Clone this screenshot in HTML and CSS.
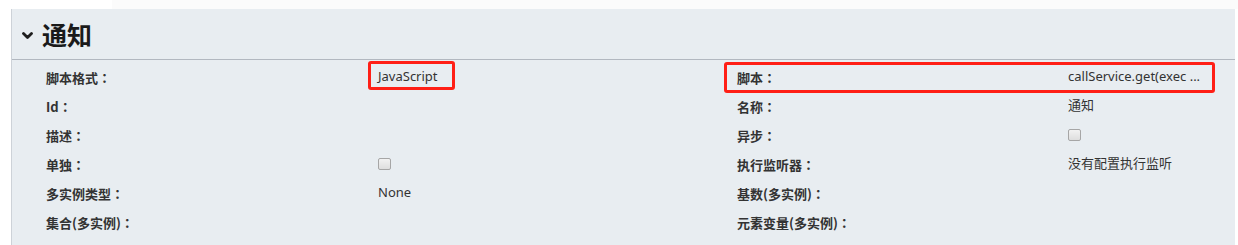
FILE: index.html
```html
<!DOCTYPE html>
<html lang="zh-CN">
<head>
<meta charset="utf-8">
<title>通知</title>
<link rel="stylesheet" href="styles.css">
</head>
<body>
<div class="topbar"><div class="tab"></div></div>
<section class="panel">
  <header class="panel-head">
    <svg class="chev" width="11" height="8" viewBox="0 0 11 8"><polyline points="1.5,1.5 5.5,5.5 9.5,1.5" fill="none" stroke="#1e1e1e" stroke-width="2.8" stroke-linecap="round" stroke-linejoin="round"/></svg>
    <h2 class="title">通知</h2>
  </header>
  <div class="props">
    <div class="lbl">脚本格式<span class="c">：</span></div><div class="val">JavaScript</div>
    <div class="lbl">脚本<span class="c">：</span></div><div class="val">callService.get(exec ...</div>

    <div class="lbl">Id<span class="c">：</span></div><div class="val"></div>
    <div class="lbl">名称<span class="c">：</span></div><div class="val">通知</div>

    <div class="lbl">描述<span class="c">：</span></div><div class="val"></div>
    <div class="lbl">异步<span class="c">：</span></div><div class="val"><input type="checkbox" class="cb"></div>

    <div class="lbl">单独<span class="c">：</span></div><div class="val"><input type="checkbox" class="cb"></div>
    <div class="lbl">执行监听器<span class="c">：</span></div><div class="val">没有配置执行监听</div>

    <div class="lbl">多实例类型<span class="c">：</span></div><div class="val">None</div>
    <div class="lbl">基数(多实例)<span class="c">：</span></div><div class="val"></div>

    <div class="lbl">集合(多实例)<span class="c">：</span></div><div class="val"></div>
    <div class="lbl">元素变量(多实例)<span class="c">：</span></div><div class="val"></div>

    <div class="lbl"></div><div class="val"></div>
    <div class="lbl"></div><div class="val"><input type="checkbox" class="cb"></div>
  </div>
  <div class="mark mark-left"></div>
  <div class="mark mark-right"></div>
</section>
</body>
</html>
```
FILE: styles.css
```css
html, body {
  margin: 0;
  padding: 0;
  background: #ffffff;
  overflow: hidden;
}
body {
  width: 1238px;
  height: 245px;
  font-family: "Noto Sans", "Noto Sans CJK SC", sans-serif;
  color: #333333;
}
.topbar {
  height: 9px;
  background: #fbfbfb;
}
.tab {
  width: 112px;
  height: 9px;
  background: #ffffff;
}
.panel {
  position: relative;
  margin: 0 3px 0 11px;
  border-left: 1px solid #cdd2d8;
  background: #e8edf1;
  height: 236px;
  overflow: hidden;
}
.panel-head {
  height: 50px;
  display: flex;
  align-items: center;
  padding-left: 10px;
  gap: 9px;
  border-bottom: 1px solid #b2b8c0;
}
.chev {
  display: block;
  margin-top: 3px;
}
.title {
  margin: 0;
  font-family: "Noto Sans CJK SC", sans-serif;
  font-size: 25px;
  font-weight: 700;
  color: #1a1a1a;
  line-height: 30px;
  padding-bottom: 1px;
}
.props {
  display: grid;
  grid-template-columns: 332px 359px 331px 1fr;
  grid-auto-rows: 29px;
  padding-left: 34px;
  padding-top: 3px;
}
.lbl, .val {
  display: flex;
  align-items: center;
  font-size: 13px;
  line-height: 17px;
  white-space: nowrap;
}
.lbl {
  font-family: "Noto Sans CJK SC", sans-serif;
  font-weight: 700;
  color: #333333;
}
.c {
  font-family: "Noto Sans CJK TC", sans-serif;
}
.val {
  padding-bottom: 3px;
  color: #333333;
}
.cb {
  appearance: none;
  -webkit-appearance: none;
  margin: 0;
  width: 13px;
  height: 12px;
  border: 1px solid #a6a6a6;
  border-radius: 2px;
  background: linear-gradient(#f2f2f2, #dedede);
  margin-top: 1px;
}
.mark {
  position: absolute;
  border: 3px solid #ff1f16;
  border-radius: 3px;
}
.mark-left {
  left: 356px;
  top: 52px;
  width: 81px;
  height: 23px;
}
.mark-right {
  left: 712px;
  top: 53px;
  width: 485px;
  height: 25px;
}
```
